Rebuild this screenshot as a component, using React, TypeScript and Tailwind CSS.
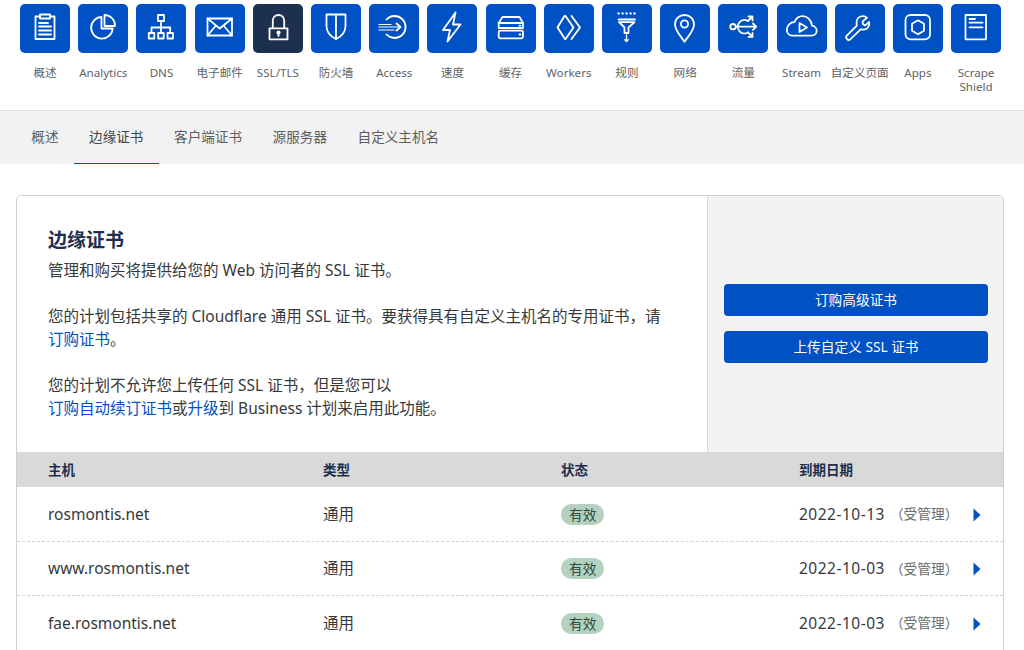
import React from "react";

const S = (p: { children: React.ReactNode }) => (
  <svg viewBox="0 0 50 49" width="50" height="49" fill="none" stroke="white" strokeWidth="1.8" strokeLinejoin="round" strokeLinecap="round">
    {p.children}
  </svg>
);

const icons: Record<string, React.ReactNode> = {
  overview: (
    <>
      <path d="M20 12.5H15.5V35H34.5V12.5H30" />
      <rect x="20" y="10.5" width="10" height="4" />
      <path d="M19 19H28M19 22.5H31M19 26.5H31M19 30.5H31" />
    </>
  ),
  pie: (
    <>
      <path d="M23.5 13A10.8 10.8 0 1 0 34.7 24.5H23.5Z" />
      <path d="M26.5 11A10.5 10.5 0 0 1 37 22H26.5Z" />
    </>
  ),
  dns: (
    <>
      <rect x="22" y="11" width="6" height="6" />
      <rect x="12.8" y="29" width="5.5" height="5.5" />
      <rect x="22.2" y="29" width="5.5" height="5.5" />
      <rect x="31.5" y="29" width="5.5" height="5.5" />
      <path d="M25 17V29M15.5 29V23.5H34.2V29" />
    </>
  ),
  mail: (
    <>
      <rect x="12.5" y="14.5" width="24.5" height="17" />
      <path d="M12.5 14.5L24.7 24.5L37 14.5M12.5 31.5L21 21.5M37 31.5L28.5 21.5" />
    </>
  ),
  lock: (
    <>
      <rect x="16.5" y="24.3" width="18" height="11" />
      <path d="M19.8 24V17C19.8 13.5 22.2 11 25.5 11S31.2 13.5 31.2 17V24" />
      <circle cx="25.5" cy="28.5" r="1.2" fill="white" />
      <path d="M25.5 29V32" />
    </>
  ),
  shield: (
    <>
      <path d="M15.5 10.5H34.5V22C34.5 28 30.5 32.5 25 35C19.5 32.5 15.5 28 15.5 22Z" />
      <path d="M25 10.5V35" />
    </>
  ),
  access: (
    <>
      <path d="M17.5 15.5A11 11 0 1 1 17.5 30.5" />
      <path d="M10 20.5H22M10 23H31M10 26H25" strokeWidth="1.2" />
      <path d="M27.5 19.5L31.5 23L27.5 26.5" />
    </>
  ),
  bolt: (
    <>
      <path d="M28.5 8.5L16 26H23L20.5 37.5L33.5 20.5H26Z" />
    </>
  ),
  cache: (
    <>
      <path d="M16.5 13H33.5L37 19V24H12.7V19Z" />
      <path d="M12.7 19H37" />
      <rect x="12.7" y="26.7" width="24.3" height="7.6" rx="1.5" />
      <path d="M33.5 21.6H34.5M33.5 30.5H34.5" />
    </>
  ),
  workers: (
    <>
      <path d="M20.5 12L13.5 23.5L21 35" strokeWidth="1.9" />
      <path d="M21.5 12L29.5 23.5L21.5 35" strokeWidth="1.9" />
      <path d="M27.5 12L36 23.5L27.5 35" strokeWidth="1.9" />
    </>
  ),
  rules: (
    <>
      <path d="M16.5 9.5H16.6M20.5 9.5H20.6M24.5 9.5H24.6M28.5 9.5H28.6M32.5 9.5H32.6" strokeWidth="2.3" />
      <path d="M16.5 15.5H33M17 18.2H32.5M17.5 18.5L22.5 23.5V29H26.5V23.5L32 18.5" />
      <path d="M24.5 31V37.5M22.8 35.8L24.5 37.5L26.2 35.8" strokeWidth="1.4" />
    </>
  ),
  pin: (
    <>
      <path d="M24.5 37.7C20 31 15 26.5 15 20.5C15 15 19.2 11 24.5 11S34 15 34 20.5C34 26.5 29 31 24.5 37.7Z" />
      <circle cx="24.5" cy="20" r="3.6" />
    </>
  ),
  traffic: (
    <>
      <circle cx="15" cy="22.7" r="2.7" />
      <path d="M30 17A6.7 6.7 0 1 0 30 28.4" />
      <path d="M17.7 22.7H38.2M35 19.5L38.2 22.7L35 25.9" />
      <path d="M30 17L34 13M30.5 12.5H34.5V16.5" />
      <path d="M30 28.4L34 32.4M30.5 32.9H34.5V28.9" />
    </>
  ),
  stream: (
    <>
      <path d="M15.5 31.7H34.5C37.7 31.7 39.7 29.4 39.7 26.8C39.7 24 37.5 22 35 21.7C34.5 16 30.5 12.2 25.5 12.2C21.5 12.2 19 14.5 17.5 18C13.5 18.2 9.8 21.4 9.8 25.5C9.8 29 12.2 31.7 15.5 31.7Z" />
      <path d="M22.5 19V28L30 23.5Z" />
    </>
  ),
  wrench: (
    <g transform="translate(1.3 3.5) scale(0.82)" strokeWidth="2.15">
      <path d="M29.5 11C34 9.5 37 12 37.5 12.5L32 17L32.5 20.5L35 22L40 17.5C41 22 38.5 27 33 27C31.5 27 30.5 26.5 30 26.5L17 39C15.5 40 14 39.5 13 38.5C12 37.5 11.5 36 12.5 34.5L25 22C24 17 25.5 12.5 29.5 11Z" />
    </g>
  ),
  apps: (
    <>
      <rect x="12.5" y="11" width="24.5" height="24.3" rx="5" />
      <path d="M25 16.3L31 19.8V26.8L25 30.3L19 26.8V19.8Z" />
    </>
  ),
  shielddoc: (
    <>
      <rect x="14.5" y="11" width="20.5" height="24.3" />
      <path d="M18.5 15H24M18.5 18.7H31.5M18.5 23.3H31.5" />
    </>
  ),
};

const items: [string, string][] = [
  ["概述", "overview"],
  ["Analytics", "pie"],
  ["DNS", "dns"],
  ["电子邮件", "mail"],
  ["SSL/TLS", "lock"],
  ["防火墙", "shield"],
  ["Access", "access"],
  ["速度", "bolt"],
  ["缓存", "cache"],
  ["Workers", "workers"],
  ["规则", "rules"],
  ["网络", "pin"],
  ["流量", "traffic"],
  ["Stream", "stream"],
  ["自定义页面", "wrench"],
  ["Apps", "apps"],
  ["Scrape Shield", "shielddoc"],
];

const tabs = ["概述", "边缘证书", "客户端证书", "源服务器", "自定义主机名"];

const rows = [
  ["rosmontis.net", "2022-10-13"],
  ["www.rosmontis.net", "2022-10-03"],
  ["fae.rosmontis.net", "2022-10-03"],
];

const A = (p: { children: React.ReactNode }) => <a className="text-[#0051c3]">{p.children}</a>;

export default function App() {
  return (
    <div className="h-[650px] overflow-hidden bg-white text-[#36393a] font-['Noto_Sans','Noto_Sans_CJK_SC',sans-serif]">
      <div className="flex h-[110px] items-start pl-4 pt-1">
        {items.map(([label, key]) => (
          <div key={label} className="flex w-[58.2px] shrink-0 flex-col items-center">
            <div className={`h-[49px] w-[50px] rounded-[5px] ${key === "lock" ? "bg-[#1d3050]" : "bg-[#0051c3]"}`}>
              <S>{icons[key]}</S>
            </div>
            <div className="mt-[13px] w-[58px] text-center text-[11.6px] leading-[14px] text-[#5f6265] whitespace-pre-line">
              {label === "Scrape Shield" ? "Scrape\nShield" : label}
            </div>
          </div>
        ))}
      </div>

      <div className="flex h-[54px] items-stretch border-t border-[#e2e2e2] bg-[#f2f2f2] pl-4 text-[13.6px] text-[#5b5e60]">
        {tabs.map((t, i) => (
          <div
            key={t}
            className={`flex items-center px-[15.3px] ${i === 1 ? "border-b border-[#0051c3] text-[#3f4346] pt-[1px]" : "pb-[1px]"}`}
          >
            {t}
          </div>
        ))}
      </div>

      <div className="ml-4 mr-5 mt-[31px] overflow-hidden rounded-t-[5px] border border-[#c6d4cc]">
        <div className="flex h-[256px]">
          <div className="w-[690px] shrink-0 pl-[31px] pt-[31px] text-[15.5px] leading-[23px] text-[#36393a]">
            <h1 className="mb-[5px] text-[19px] font-bold leading-[27px] text-[#1d2f4e]">边缘证书</h1>
            <p>管理和购买将提供给您的 Web 访问者的 SSL 证书。</p>
            <p className="mt-[23px] w-[630px]">
              您的计划包括共享的 Cloudflare 通用 SSL 证书。要获得具有自定义主机名的专用证书，请
              <br />
              <A>订购证书</A>。
            </p>
            <p className="mt-[23px]">
              您的计划不允许您上传任何 SSL 证书，但是您可以
              <br />
              <A>订购自动续订证书</A>或<A>升级</A>到 Business 计划来启用此功能。
            </p>
          </div>
          <div className="flex flex-1 flex-col justify-center gap-[15px] border-l border-[#d3d6d4] bg-[#f2f2f2] pb-px pl-4 pr-[15px]">
            <button className="h-8 rounded-[4px] bg-[#0051c3] text-[13.7px] text-white">订购高级证书</button>
            <button className="h-8 rounded-[4px] bg-[#0051c3] text-[13.7px] text-white">上传自定义 SSL 证书</button>
          </div>
        </div>

        <div className="grid h-[35px] grid-cols-[275px_238px_238px_1fr] items-center bg-[#d9d9d7] pl-[31px] pt-px text-[13.5px] font-bold text-[#1d2f4e]">
          <div>主机</div>
          <div>类型</div>
          <div>状态</div>
          <div>到期日期</div>
        </div>

        {rows.map(([h, d]) => (
          <div
            key={h}
            className="grid h-[54.67px] grid-cols-[275px_238px_238px_1fr] items-center border-b border-dashed border-[#d0d3d1] pl-[31px] pt-px text-[15.5px] text-[#36393a]"
          >
            <div>{h}</div>
            <div>通用</div>
            <div>
              <span className="inline-block h-[21px] rounded-full bg-[#b5d1c0] px-2 text-[13.7px] leading-[21px] text-[#2f4a3c]">有效</span>
            </div>
            <div className="flex items-center whitespace-nowrap">
              <span className="tracking-[0.5px]">{d}</span>
              <span className="ml-[5px] w-[70px] shrink-0 text-[13.7px] text-[#6a6d70]">（受管理）</span>
              <svg className="ml-[13px] mt-px shrink-0" width="8" height="14" viewBox="0 0 8 14">
                <path d="M0.5 0.5L7.5 7L0.5 13.5Z" fill="#0051c3" />
              </svg>
            </div>
          </div>
        ))}
      </div>
    </div>
  );
}
